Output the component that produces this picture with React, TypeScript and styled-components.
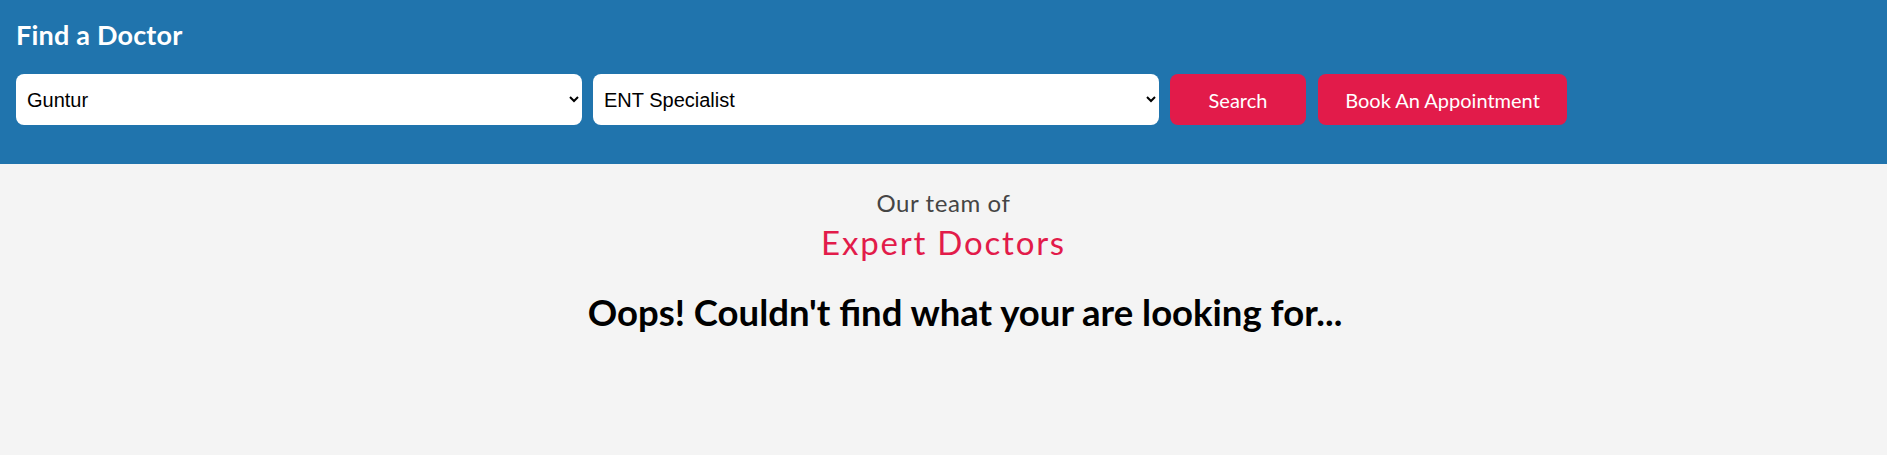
import React from "react";
import styled, { createGlobalStyle } from "styled-components";

const Global = createGlobalStyle`
  html, body { margin: 0; padding: 0; background: #f4f4f4; }
  body { font-family: "Lato", "Liberation Sans", sans-serif; }
`;

const Header = styled.header`
  background: #2074ad;
  padding: 18px 16px 38px 16px;
  height: 164px;
  box-sizing: border-box;
`;

const Title = styled.h2`
  margin: 0;
  color: #ffffff;
  font-family: "Lato", sans-serif;
  font-weight: 700;
  font-size: 27px;
  line-height: 34px;
  letter-spacing: 0.2px;
`;

const Bar = styled.div`
  display: flex;
  align-items: center;
  gap: 11px;
  margin-top: 22px;
`;

const Select = styled.select`
  width: 566px;
  height: 51px;
  border: none;
  border-radius: 8px;
  background: #ffffff;
  color: #000;
  font-family: "Liberation Sans", Arial, sans-serif;
  font-size: 20px;
  padding: 0 8px 0 7px;
  outline: none;
`;

const Button = styled.button<{ $w: number; $ml?: number }>`
  width: ${(p) => p.$w}px;
  height: 51px;
  margin-left: ${(p) => p.$ml ?? 0}px;
  border: none;
  border-radius: 8px;
  background: #e21b4a;
  color: #ffffff;
  font-family: "Lato", sans-serif;
  font-size: 20px;
  font-weight: 400;
  cursor: pointer;
`;

const Section = styled.section`
  display: flex;
  flex-direction: column;
  align-items: center;
  padding-top: 23px;
`;

const Kicker = styled.div`
  color: #454545;
  font-family: "Lato", sans-serif;
  font-size: 24px;
  line-height: 32px;
  letter-spacing: 0.6px;
`;

const Heading = styled.h2`
  margin: 3px 0 0 0;
  color: #e21b4a;
  font-family: "Lato", sans-serif;
  font-weight: 400;
  font-size: 33px;
  line-height: 40px;
  letter-spacing: 1.8px;
`;

const Empty = styled.h2`
  margin: 28px 0 0 0;
  padding-left: 43px;
  color: #000;
  font-family: "Lato", sans-serif;
  font-weight: 700;
  font-size: 36.5px;
  line-height: 44px;
`;

export default function App() {
  return (
    <>
      <Global />
      <Header>
        <Title>Find a Doctor</Title>
        <Bar>
          <Select defaultValue="Guntur">
            <option>Guntur</option>
            <option>Vijayawada</option>
          </Select>
          <Select defaultValue="ENT Specialist">
            <option>ENT Specialist</option>
            <option>Cardiologist</option>
          </Select>
          <Button $w={136}>Search</Button>
          <Button $w={249} $ml={1}>Book An Appointment</Button>
        </Bar>
      </Header>
      <Section>
        <Kicker>Our team of</Kicker>
        <Heading>Expert Doctors</Heading>
        <Empty>Oops! Couldn't find what your are looking for...</Empty>
      </Section>
    </>
  );
}
